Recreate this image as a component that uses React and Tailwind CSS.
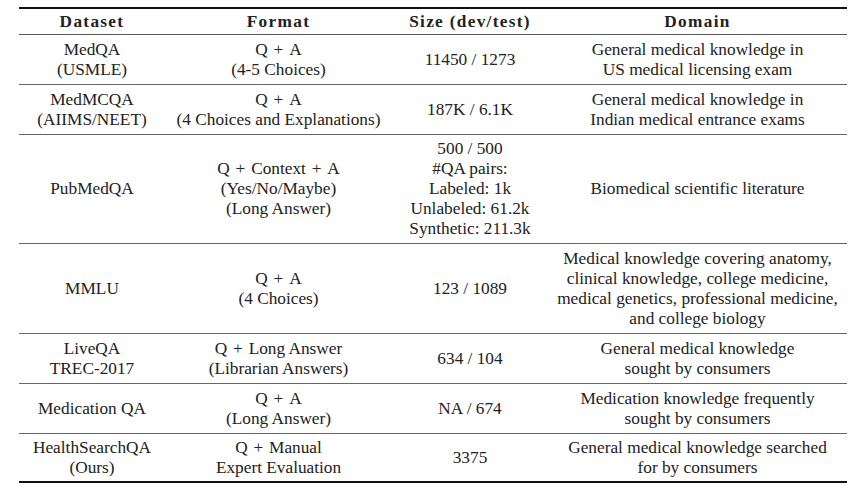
const rows = [
  {
    h: 'h-[50px]',
    dataset: ['MedQA', '(USMLE)'],
    format: ['Q + A', '(4-5 Choices)'],
    size: ['11450 / 1273'],
    domain: ['General medical knowledge in', 'US medical licensing exam'],
  },
  {
    h: 'h-[50px]',
    dataset: ['MedMCQA', '(AIIMS/NEET)'],
    format: ['Q + A', '(4 Choices and Explanations)'],
    size: ['187K / 6.1K'],
    domain: ['General medical knowledge in', 'Indian medical entrance exams'],
  },
  {
    h: 'h-[109px]',
    dataset: ['PubMedQA'],
    format: ['Q + Context + A', '(Yes/No/Maybe)', '(Long Answer)'],
    size: ['500 / 500', '#QA pairs:', 'Labeled: 1k', 'Unlabeled: 61.2k', 'Synthetic: 211.3k'],
    domain: ['Biomedical scientific literature'],
  },
  {
    h: 'h-[90px]',
    dataset: ['MMLU'],
    format: ['Q + A', '(4 Choices)'],
    size: ['123 / 1089'],
    domain: [
      'Medical knowledge covering anatomy,',
      'clinical knowledge, college medicine,',
      'medical genetics, professional medicine,',
      'and college biology',
    ],
  },
  {
    h: 'h-[50px]',
    dataset: ['LiveQA', 'TREC-2017'],
    format: ['Q + Long Answer', '(Librarian Answers)'],
    size: ['634 / 104'],
    domain: ['General medical knowledge', 'sought by consumers'],
  },
  {
    h: 'h-[50px]',
    dataset: ['Medication QA'],
    format: ['Q + A', '(Long Answer)'],
    size: ['NA / 674'],
    domain: ['Medication knowledge frequently', 'sought by consumers'],
  },
  {
    h: 'h-[49px]',
    dataset: ['HealthSearchQA', '(Ours)'],
    format: ['Q + Manual', 'Expert Evaluation'],
    size: ['3375'],
    domain: ['General medical knowledge searched', 'for by consumers'],
    last: true,
  },
];

const cols = 'grid grid-cols-[146px_227px_156px_299px]';

// math-style "+" gets a little more room, as in the LaTeX original
function Line({ text }) {
  const parts = text.split(' + ');
  return (
    <span className="whitespace-pre leading-[20px]">
      {parts.map((p, i) => (
        <span key={i}>
          {i > 0 && <span className="px-[1.5px]"> + </span>}
          {p}
        </span>
      ))}
    </span>
  );
}

function Cell({ lines }) {
  return (
    <div className="flex flex-col items-center justify-center text-center">
      {lines.map((l, i) => (
        <Line key={i} text={l} />
      ))}
    </div>
  );
}

export default function App() {
  return (
    <div className="w-[863px] h-[493px] bg-white pt-[7px] pl-[19px] text-[#222] text-[17.3px] font-['Liberation_Serif',serif]">
      <div className="w-[828px] border-t-2 border-[#111]">
        <div className={`${cols} h-[26px] border-b border-[#555] font-bold tracking-[1.3px]`}>
          <Cell lines={['Dataset']} />
          <Cell lines={['Format']} />
          <Cell lines={['Size (dev/test)']} />
          <Cell lines={['Domain']} />
        </div>
        {rows.map((r, i) => (
          <div
            key={i}
            className={`${cols} ${r.h} ${r.last ? 'border-b-2 border-[#111]' : 'border-b border-[#666]'}`}
          >
            <Cell lines={r.dataset} />
            <Cell lines={r.format} />
            <Cell lines={r.size} />
            <Cell lines={r.domain} />
          </div>
        ))}
      </div>
    </div>
  );
}
